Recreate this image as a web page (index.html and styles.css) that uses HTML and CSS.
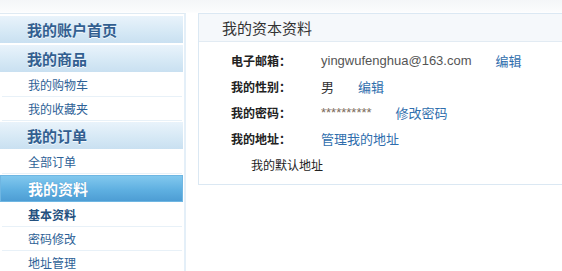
FILE: index.html
```html
<!DOCTYPE html>
<html lang="zh-CN">
<head>
<meta charset="utf-8">
<title>我的资本资料</title>
<link rel="stylesheet" href="styles.css">
</head>
<body>
<div class="page">
  <aside class="sidebar">
    <div class="side-head">我的账户首页</div>
    <div class="side-head">我的商品</div>
    <a class="side-link">我的购物车</a>
    <a class="side-link">我的收藏夹</a>
    <div class="side-head">我的订单</div>
    <a class="side-link">全部订单</a>
    <div class="side-head active">我的资料</div>
    <a class="side-link current">基本资料</a>
    <a class="side-link">密码修改</a>
    <a class="side-link last">地址管理</a>
  </aside>
  <main class="main">
    <section class="panel">
      <div class="panel-head">我的资本资料</div>
      <div class="panel-body">
        <div class="row"><span class="label">电子邮箱：</span><span class="value email">yingwufenghua@163.com</span><a class="link">编辑</a></div>
        <div class="row"><span class="label">我的性别：</span><span class="value">男</span><a class="link">编辑</a></div>
        <div class="row"><span class="label">我的密码：</span><span class="value stars">**********</span><a class="link">修改密码</a></div>
        <div class="row"><span class="label">我的地址：</span><a class="link first">管理我的地址</a></div>
        <div class="row sub">我的默认地址</div>
      </div>
    </section>
  </main>
</div>
</body>
</html>
```
FILE: styles.css
```css
html, body {
  margin: 0;
  padding: 0;
  overflow: hidden;
  background: #fff;
}
body {
  font-family: "Noto Sans CJK SC", "Liberation Sans", sans-serif;
  font-size: 12px;
  color: #333;
  background: linear-gradient(#f4f6f8 0, #fbfcfd 12px, #fff 13px);
}
.page {
  display: flex;
  align-items: flex-start;
  padding-top: 13px;
  width: 562px;
}
.sidebar {
  width: 184px;
  flex: none;
  display: flex;
  flex-direction: column;
  border-top: 1px solid #dfeaf3;
  border-right: 2px solid #e4eff8;
  padding-top: 1px;
  height: 256px;
}
.side-head {
  height: 27px;
  line-height: 27px;
  margin: 1px 1px 1px 0;
  padding-left: 27px;
  font-size: 15px;
  font-weight: bold;
  color: #325f90;
  background: linear-gradient(#e9f3fb, #d5e8f5 60%, #c9e0f1);
  text-shadow: 0 1px 0 #f4f9fd;
}
.side-head.active {
  color: #fff;
  text-shadow: 0 0 1px #3b86c0;
  background: linear-gradient(#82c8ee, #5fb0e1 55%, #4d9dd4);
  border: 1px solid #6fb6e2;
  height: 25px;
  line-height: 25px;
}
.side-link {
  display: block;
  height: 23px;
  line-height: 23px;
  padding-left: 26px;
  margin: 0 2px;
  font-size: 12px;
  color: #2d6196;
  border-bottom: 1px solid #e8f1f8;
}
.side-link.last {
  border-bottom: none;
  height: 20px;
}
.side-link.current {
  font-weight: bold;
  color: #23507e;
}
.main {
  flex: 1;
  margin-left: 12px;
}
.panel {
  border: 1px solid #dbe8f3;
  border-right: none;
  background: #fff;
}
.panel-head {
  height: 27px;
  line-height: 27px;
  padding-left: 23px;
  font-size: 15px;
  color: #333;
  background: #f5f8fb;
  border-bottom: 1px solid #e2ebf3;
}
.panel-body {
  padding: 5px 0 7px 32px;
}
.row {
  display: flex;
  align-items: center;
  height: 26px;
}
.label {
  width: 90px;
  flex: none;
  font-weight: bold;
  color: #222;
}
.value {
  font-size: 13px;
  color: #333;
}
.email {
  font-family: "Liberation Sans", sans-serif;
  color: #555;
}
.stars {
  font-family: "Liberation Sans", sans-serif;
  color: #7a6a5a;
}
.link {
  margin-left: 24px;
  font-size: 13px;
  color: #2f6ead;
  cursor: pointer;
}
.link.first {
  margin-left: 0;
}
.row.sub {
  padding-left: 20px;
  color: #222;
}
```
